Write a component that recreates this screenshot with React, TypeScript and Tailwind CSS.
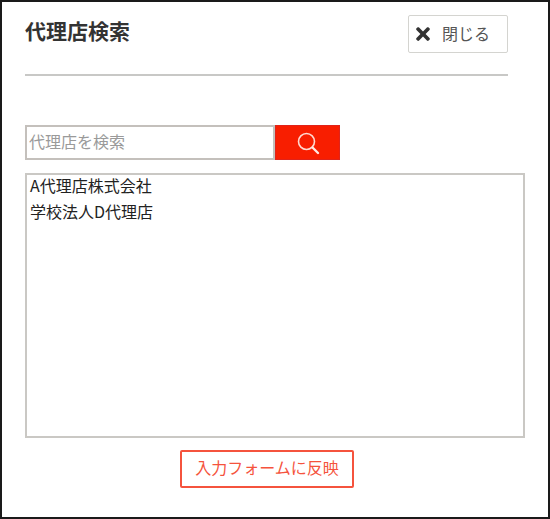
import { FaTimes } from "react-icons/fa";

const agencies = ["A代理店株式会社", "学校法人D代理店"];

const fontStack = "[font-family:'Noto_Sans_CJK_JP','Noto_Sans',sans-serif]";

export default function App() {
  return (
    <div className={`h-[519px] w-[550px] bg-white ${fontStack}`}>
      <div className="h-[519px] w-[550px] border-2 border-[#1a1a1a] pl-[23px] pr-[23px]">
        <div className="flex w-[483px] items-start justify-between pt-[13px]">
          <h2 className="text-[21px] leading-[30px] font-bold text-[#333333]">
            代理店検索
          </h2>
          <button
            type="button"
            className="flex h-[38px] w-[100px] items-center rounded-[2px] border border-[#d4d4d0] bg-white pl-[4px] text-[16px] text-[#555555]"
          >
            <FaTimes className="h-[20px] w-[20px] text-[#333333]" />
            <span className="ml-[9px] mb-[2px]">閉じる</span>
          </button>
        </div>

        <hr className="mt-[21px] w-[483px] border-0 border-t-2 border-[#c8c8c6]" />

        <div className="mt-[49px] flex h-[35px] w-[315px]">
          <input
            type="text"
            placeholder="代理店を検索"
            className="h-full w-[250px] border-2 border-[#c4c0bc] bg-white px-[2px] pb-[4px] text-[16px] text-[#333333] outline-none placeholder:text-[#9a9a9a]"
          />
          <button
            type="button"
            className="flex h-full w-[65px] items-center justify-center border border-[#e0231a] bg-[#f81e00]"
          >
            <svg width="24" height="24" viewBox="0 0 24 24" fill="none">
              <circle cx="10.5" cy="10.5" r="8" stroke="#ffd9d0" strokeWidth="1.6" />
              <path d="M16.5 16.5 L22 22" stroke="#ffe8e2" strokeWidth="2.4" strokeLinecap="round" />
            </svg>
          </button>
        </div>

        <ul className="mt-[13px] h-[265px] w-[500px] border-2 border-[#cac8c4] bg-white px-[3px] text-[16px] leading-[26px] text-[#222222]">
          {agencies.map((name) => (
            <li key={name} className="mt-[-3px] mb-[3px]">
              {name}
            </li>
          ))}
        </ul>

        <div className="mt-[12px] flex w-[500px] justify-center">
          <button
            type="button"
            className="ml-[-16px] h-[38px] w-[174px] rounded-[2px] border-2 border-[#f5533d] bg-white pb-[4px] text-[16px] text-[#f5533d]"
          >
            入力フォームに反映
          </button>
        </div>
      </div>
    </div>
  );
}
